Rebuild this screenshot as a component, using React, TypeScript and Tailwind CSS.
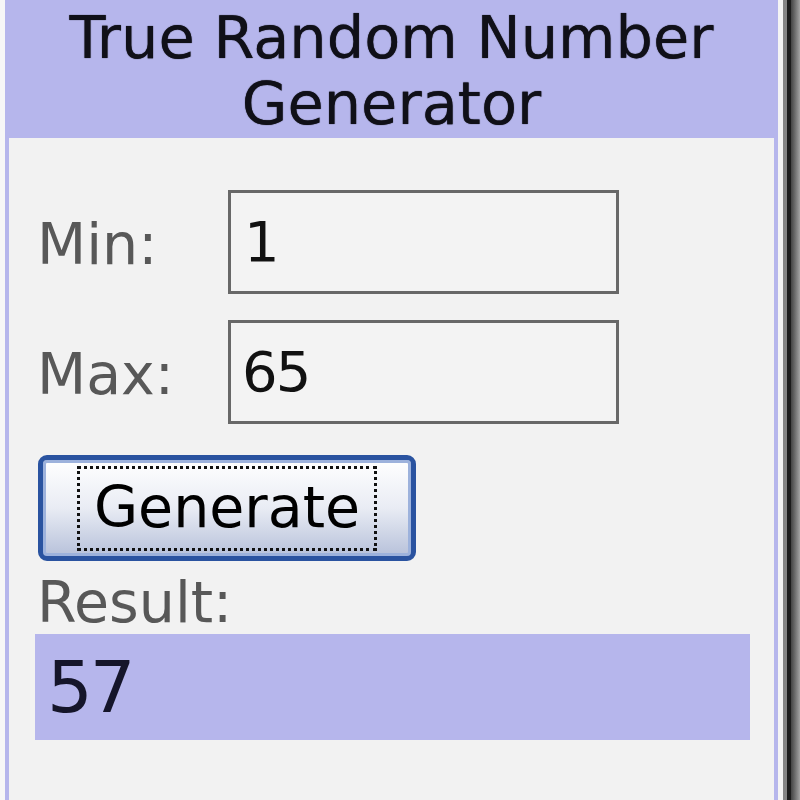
export default function App() {
  return (
    <div className="flex h-[800px] w-[800px] bg-[#f5f5f5] font-['DejaVu_Sans',sans-serif]">
      <div className="w-[5px] bg-[#f7f7f7]" />

      {/* widget card */}
      <div className="flex w-[773px] flex-col border-x-4 border-[#b6b6ec] bg-[#f2f2f2]">
        <div className="h-[138px] bg-[#b6b6ec] pt-[5px] text-center text-[59px] leading-[66px] text-[#101018] [text-shadow:0_0_1px_#101018]">
          True Random Number
          <br />
          Generator
        </div>

        <div className="flex flex-col pl-[28px]">
          <div className="mt-[52px] flex items-center">
            <span className="w-[191px] pt-[6px] text-[57px] text-[#585858]">Min:</span>
            <div className="flex h-[104px] w-[391px] items-center border-[3px] border-[#686868] bg-[#f3f3f3] pl-[13px] text-[56px] text-[#111]">
              1
            </div>
          </div>

          <div className="mt-[26px] flex items-center">
            <span className="w-[191px] pt-[6px] text-[57px] text-[#585858]">Max:</span>
            <div className="flex h-[104px] w-[391px] items-center border-[3px] border-[#686868] bg-[#f3f3f3] pl-[11px] text-[56px] tracking-[-2px] text-[#111]">
              65
            </div>
          </div>

          <button className="ml-[1px] mt-[31px] flex h-[106px] w-[378px] items-center justify-center rounded-[9px] border-[5px] border-[#2a53a0] bg-gradient-to-b from-white via-[#e9ecf4] to-[#b7c1da] shadow-[inset_0_0_0_3px_#9db2dc]">
            <span className="flex h-[85px] w-[300px] items-center justify-center border-[3px] border-dotted border-[#111] text-[57px] text-black">
              Generate
            </span>
          </button>

          <span className="mt-[9px] text-[57px] leading-[64px] text-[#585858]">Result:</span>

          <div className="-ml-[2px] flex h-[106px] w-[715px] items-center bg-[#b6b6ec] pl-[12px] text-[72px] tracking-[-3px] text-[#15152a]">
            57
          </div>
        </div>
      </div>

      {/* window edge shadow */}
      <div className="w-[5px] bg-[#f4f4f4]" />
      <div className="w-[4px] bg-[#858585]" />
      <div className="w-[4px] bg-[#1c1c1c]" />
      <div className="w-[9px] bg-gradient-to-r from-[#444444] to-[#a5a5a5]" />
    </div>
  );
}
